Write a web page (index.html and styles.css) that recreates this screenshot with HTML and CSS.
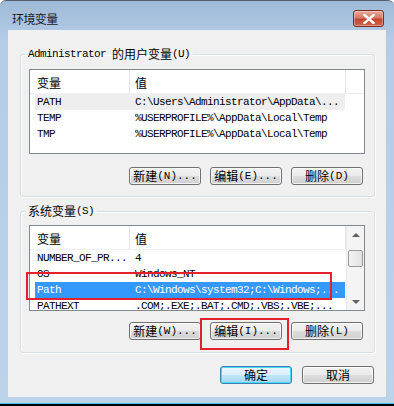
FILE: index.html
```html
<!DOCTYPE html>
<html lang="zh-CN">
<head>
    <meta charset="UTF-8">
    <title>环境变量</title>
    <link rel="stylesheet" href="styles.css">
</head>
<body>

<div class="window">
    <div class="titlebar">
        <span class="title">环境变量</span>
        <button class="close">
            <svg width="12" height="10" viewBox="0 0 12 10">
                <path d="M1.5 1 L10.5 9 M10.5 1 L1.5 9" stroke="#fff" stroke-width="2.4" stroke-linecap="square"/>
            </svg>
        </button>
    </div>

    <div class="client">
        <fieldset class="group user-group">
            <legend>Administrator <span class="zh">的用户变量</span>(U)</legend>
            <div class="list user-list">
                <div class="list-main">
                    <div class="list-head">
                        <div class="col-name"><span class="zh">变量</span></div>
                        <div class="col-value"><span class="zh">值</span></div>
                    </div>
                    <div class="row hot"><span class="cell-name">PATH</span><span class="cell-value">C:\Users\Administrator\AppData\...</span></div>
                    <div class="row"><span class="cell-name">TEMP</span><span class="cell-value">%USERPROFILE%\AppData\Local\Temp</span></div>
                    <div class="row"><span class="cell-name">TMP</span><span class="cell-value">%USERPROFILE%\AppData\Local\Temp</span></div>
                </div>
            </div>
            <div class="buttons">
                <button class="btn"><span class="zh">新建</span>(N)...</button>
                <button class="btn"><span class="zh">编辑</span>(E)...</button>
                <button class="btn"><span class="zh">删除</span>(D)</button>
            </div>
        </fieldset>

        <fieldset class="group sys-group">
            <legend><span class="zh">系统变量</span>(S)</legend>
            <div class="list sys-list">
                <div class="list-main">
                    <div class="list-head">
                        <div class="col-name"><span class="zh">变量</span></div>
                        <div class="col-value"><span class="zh">值</span></div>
                    </div>
                    <div class="row"><span class="cell-name">NUMBER_OF_PR...</span><span class="cell-value">4</span></div>
                    <div class="row"><span class="cell-name">OS</span><span class="cell-value">Windows_NT</span></div>
                    <div class="row selected"><span class="cell-name">Path</span><span class="cell-value">C:\Windows\system32;C:\Windows;...</span></div>
                    <div class="row"><span class="cell-name">PATHEXT</span><span class="cell-value">.COM;.EXE;.BAT;.CMD;.VBS;.VBE;...</span></div>
                </div>
                <div class="scrollbar">
                    <div class="arrow up"></div>
                    <div class="thumb"></div>
                    <div class="track"></div>
                    <div class="arrow down"></div>
                </div>
            </div>
            <div class="buttons">
                <button class="btn"><span class="zh">新建</span>(W)...</button>
                <button class="btn"><span class="zh">编辑</span>(I)...</button>
                <button class="btn"><span class="zh">删除</span>(L)</button>
            </div>
        </fieldset>

        <div class="dialog-buttons">
            <button class="btn default"><span class="zh">确定</span></button>
            <button class="btn"><span class="zh">取消</span></button>
        </div>
    </div>

    <div class="mark mark-row"></div>
    <div class="mark mark-btn"></div>
</div>

</body>
</html>
```

FILE: styles.css
```css
body {
    margin: 0;
    font-family: "Liberation Mono", "Noto Sans CJK SC", monospace;
    font-size: 11px;
    letter-spacing: -0.6px;
    color: #000;
}

.zh {
    font-family: "Noto Sans CJK SC", sans-serif;
    font-size: 12px;
    letter-spacing: 0;
    line-height: 14px;
}

.window {
    position: relative;
    width: 394px;
    height: 406px;
    box-sizing: border-box;
    background: linear-gradient(180deg, #9fbad8 0%, #b4cce6 40px, #bcd3ea 100%);
    border-top: 1px solid #55606e;
    border-radius: 6px 6px 0 0;
    border-bottom: 2px solid #000;
    box-shadow: inset 0 -1px 0 #3fc3e6;
    overflow: hidden;
}

.titlebar {
    height: 29px;
    display: flex;
    justify-content: space-between;
    align-items: flex-start;
}

.title {
    font-family: "Noto Sans CJK SC", sans-serif;
    font-size: 12px;
    line-height: 16px;
    margin: 10px 0 0 12px;
    color: #1a1a1a;
}

.close {
    margin: 9px 10px 0 0;
    width: 31px;
    height: 17px;
    padding: 0;
    display: flex;
    align-items: center;
    justify-content: center;
    border: 1px solid #7a2b22;
    border-radius: 3px;
    background: linear-gradient(180deg, #e9a99b 0%, #d77b68 45%, #c4452f 55%, #d0634c 100%);
    box-shadow: inset 0 0 0 1px rgba(255, 255, 255, 0.35);
}

.client {
    margin: 0 8px;
    height: 367px;
    background: #f0f0f0;
    padding-top: 17px;
    box-sizing: border-box;
}

.group {
    margin: 0 11px 0 12px;
    min-width: 0;
    border: 1px solid #d5dfe5;
    border-radius: 3px;
    box-shadow: 1px 1px 0 #fff inset, 1px 1px 0 #fff;
}

.user-group {
    padding: 8px 9px 11px 8px;
}

.sys-group {
    margin-top: 7px;
    padding: 7px 9px 12px 8px;
}

.group legend {
    margin-left: -4px;
    padding: 0 3px;
    height: 14px;
    line-height: 14px;
    display: flex;
    align-items: center;
    white-space: pre;
}

.list {
    display: flex;
    border: 1px solid #828790;
    background: #fff;
    overflow: hidden;
}

.user-list {
    height: 83px;
}

.sys-list {
    height: 84px;
}

.list-main {
    flex: 1;
    min-width: 0;
}

.list-head {
    display: flex;
    height: 23px;
    border-bottom: 1px solid #eef0f2;
    align-items: center;
}

.col-name {
    width: 92px;
    padding: 2px 0 0 7px;
    box-sizing: border-box;
    height: 100%;
    display: flex;
    align-items: center;
    border-right: 1px solid #e5e5e5;
}

.col-name {
    width: 100px;
}

.col-value {
    flex: 1;
    padding: 2px 0 0 5px;
    box-sizing: border-box;
    height: 100%;
    display: flex;
    align-items: center;
    border-right: 1px solid #e5e5e5;
}

.user-list .col-value {
    margin-right: 18px;
}

.row {
    display: flex;
    height: 16px;
    line-height: 16px;
    margin: 0 19px 0 5px;
    white-space: nowrap;
}

.sys-list .row {
    margin-right: 1px;
}

.row.hot {
    background: #eeeeee;
}

.row.selected {
    background: #3399ff;
    color: #fff;
}

.cell-name {
    width: 98px;
    padding-left: 2px;
    overflow: hidden;
}

.cell-value {
    flex: 1;
    overflow: hidden;
}

.scrollbar {
    width: 17px;
    display: flex;
    flex-direction: column;
    background: #f4f4f4;
    border-left: 1px solid #eaeaea;
}

.arrow {
    height: 17px;
    display: flex;
    align-items: center;
    justify-content: center;
}

.arrow::after {
    content: "";
    border-left: 4px solid transparent;
    border-right: 4px solid transparent;
}

.arrow.up::after {
    border-bottom: 4px solid #606060;
}

.arrow.down::after {
    border-top: 4px solid #606060;
}

.thumb {
    height: 15px;
    margin: 7px 1px 0;
    border: 1px solid #9a9a9a;
    border-radius: 2px;
    background: linear-gradient(90deg, #f3f3f3, #e2e2e2);
}

.track {
    flex: 1;
}

.buttons {
    display: flex;
    justify-content: flex-end;
    gap: 9px;
    padding-right: 2px;
    margin-top: 13px;
}

.sys-group .buttons {
    margin-top: 11px;
}

.btn {
    width: 72px;
    height: 18px;
    padding: 0;
    display: flex;
    align-items: center;
    justify-content: center;
    font: inherit;
    line-height: 14px;
    color: #000;
    white-space: pre;
    border: 1px solid #707070;
    border-radius: 3px;
    background: linear-gradient(180deg, #f2f2f2 0%, #ebebeb 50%, #dddddd 51%, #cfcfcf 100%);
    box-shadow: inset 0 0 0 1px rgba(255, 255, 255, 0.7);
}

.dialog-buttons {
    display: flex;
    justify-content: flex-end;
    gap: 10px;
    margin: 13px 12px 0 0;
}

.btn.default {
    border-color: #3c7fb1;
    background: linear-gradient(180deg, #eaf6fd 0%, #d9f0fc 50%, #bee6fd 51%, #a7d9f5 100%);
    box-shadow: inset 0 0 0 1px #48d8fb;
}

.mark {
    position: absolute;
    border: 2px solid #e4202c;
}

.mark-row {
    left: 26px;
    top: 271px;
    width: 302px;
    height: 24px;
}

.mark-btn {
    left: 200px;
    top: 317px;
    width: 85px;
    height: 28px;
}
```
